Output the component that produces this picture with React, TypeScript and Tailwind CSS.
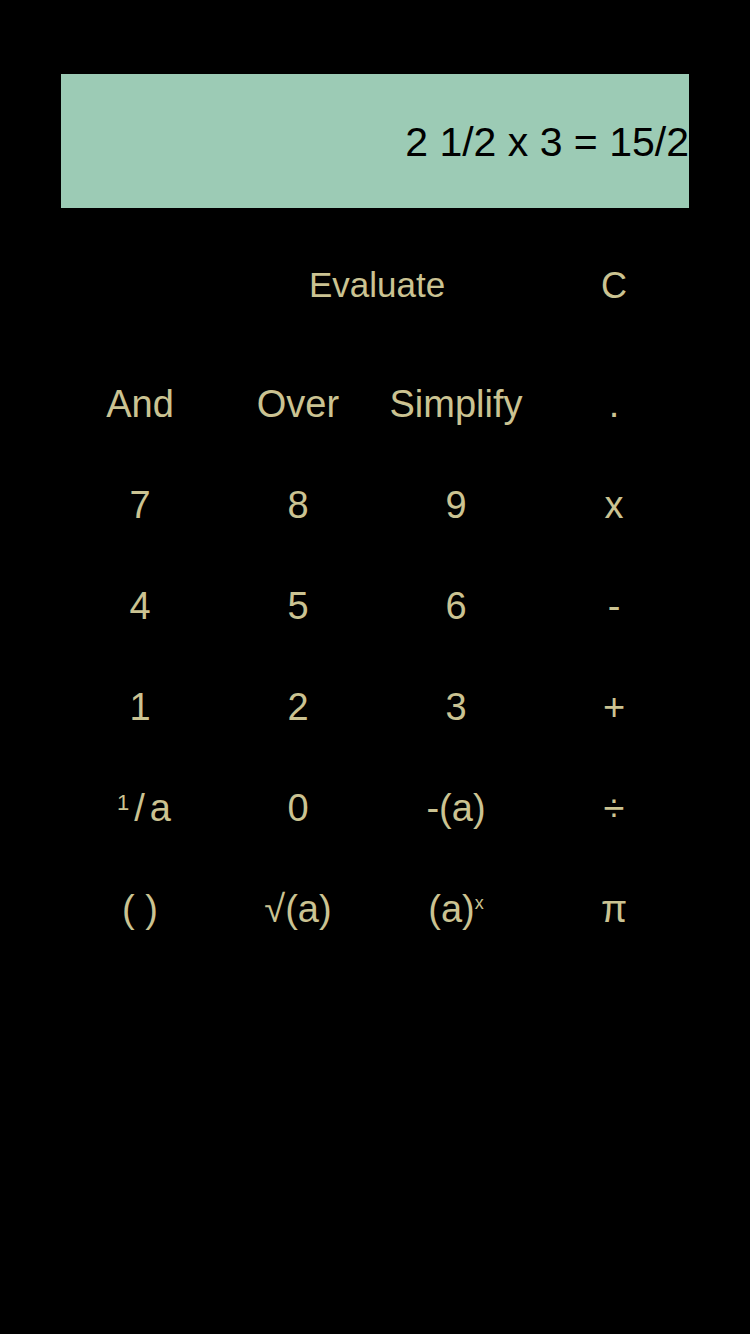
const keyRows: string[][] = [
    ['And', 'Over', 'Simplify', '.'],
    ['7', '8', '9', 'x'],
    ['4', '5', '6', '-'],
    ['1', '2', '3', '+'],
    ['1/a', '0', '-(a)', '÷'],
    ['( )', '√(a)', '(a)x', 'π'],
];

// a few keys have a small raised part
const renderLabel = (label: string) => {
    if (label === '(a)x') {
        return (
            <span>
                (a)<span className="relative -top-[13px] text-[18px]">x</span>
            </span>
        );
    }
    if (label === '1/a') {
        return (
            <span className="pl-[8px]">
                <span className="relative -top-[11px] text-[22px]">1</span>
                <span className="mx-[5px]">/</span>a
            </span>
        );
    }
    return label;
};

const Key = ({ label, small }: { label: string; small?: boolean }) => (
    <button
        className={`flex h-full items-center justify-center text-[#cbc392] ${small ? 'text-[36px]' : 'text-[38px]'}`}
    >
        {renderLabel(label)}
    </button>
);

export default function App() {
    return (
        <div
            className="h-[1334px] w-[750px] bg-black pl-[61px] pt-[74px]"
            style={{ fontFamily: '"Liberation Sans", Arial, sans-serif' }}
        >
            {/* display */}
            <div className="flex h-[134px] w-[628px] items-center justify-end overflow-hidden bg-[#9ccbb5] pt-[3px]">
                <span className="whitespace-nowrap text-[41px] text-black">2 1/2 x 3 = 15/2</span>
            </div>

            <div className="w-[632px]">
                {/* top row */}
                <div className="mt-[27px] grid h-[101px] grid-cols-4">
                    <div />
                    <div className="col-span-2 flex items-center justify-center text-[35px] text-[#cbc392]">
                        Evaluate
                    </div>
                    <Key label="C" small />
                </div>

                <div className="mt-[18px]">
                    {keyRows.map((row, ix) => (
                        <div className="grid h-[101px] grid-cols-4" key={`row-${ix}`}>
                            {row.map((k) => (
                                <Key label={k} key={k} />
                            ))}
                        </div>
                    ))}
                </div>
            </div>
        </div>
    );
}
